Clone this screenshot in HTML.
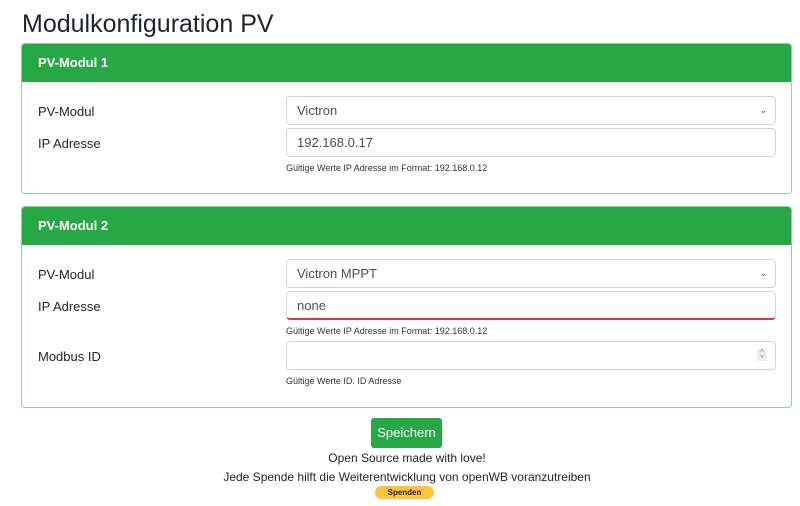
<!DOCTYPE html><html><head><style>
body{margin:0;width:800px;height:506px;background:#fff;font-family:"Liberation Sans",sans-serif;color:#212529;position:relative;overflow:hidden}
.a{position:absolute}
h1{position:absolute;left:22px;top:8px;margin:0;font-size:25px;font-weight:400;line-height:32px}
.card{position:absolute;left:21px;width:769px;border:1px solid #8fd19e;border-radius:4px;overflow:hidden}
.hd{background:#28a745;color:#fff;font-weight:bold;font-size:13px;height:38px;line-height:38px;padding-left:16px}
.lbl{position:absolute;left:16px;font-size:13px}
.in{position:absolute;left:264px;width:478px;height:27px;border:1px solid #ced4da;border-radius:4px;font-size:13px;line-height:27px;padding-left:10px;color:#495057;box-sizing:content-box}
.help{position:absolute;left:264px;font-size:9px;color:#333}
</style></head><body>
<h1>Modulkonfiguration PV</h1>
<div class="card" style="top:43px;height:149px">
<div class="hd">PV-Modul 1</div>
<div class="lbl" style="top:60px">PV-Modul</div>
<div class="in" style="top:52px">Victron<span class="a" style="right:8px;top:0;font-size:9px">&#8964;</span></div>
<div class="lbl" style="top:92px">IP Adresse</div>
<div class="in" style="top:84px">192.168.0.17</div>
<div class="help" style="top:119px">Gültige Werte IP Adresse im Format: 192.168.0.12</div>
</div>
<div class="card" style="top:206px;height:200px">
<div class="hd">PV-Modul 2</div>
<div class="lbl" style="top:60px">PV-Modul</div>
<div class="in" style="top:52px">Victron MPPT<span class="a" style="right:8px;top:0;font-size:9px">&#8964;</span></div>
<div class="lbl" style="top:92px">IP Adresse</div>
<div class="in" style="top:84px;border-bottom:2px solid #dc3545;height:26px">none</div>
<div class="help" style="top:119px">Gültige Werte IP Adresse im Format: 192.168.0.12</div>
<div class="lbl" style="top:142px">Modbus ID</div>
<div class="in" style="top:134px"><span class="a" style="right:8px;top:7px;width:10px;height:12px;background:#eee;font-size:7px;line-height:6px;text-align:center;color:#888">&#708;<br>&#709;</span></div>
<div class="help" style="top:169px">Gültige Werte ID. ID Adresse</div>
</div>
<div class="a" style="left:371px;top:418px;width:71px;height:30px;background:#28a745;border-radius:3px;color:#fff;font-size:13px;line-height:30px;text-align:center">Speichern</div>
<div class="a" style="left:0;width:814px;top:451px;text-align:center;font-size:12px">Open Source made with love!</div>
<div class="a" style="left:0;width:814px;top:470px;text-align:center;font-size:12px">Jede Spende hilft die Weiterentwicklung von openWB voranzutreiben</div>
<div class="a" style="left:375px;top:486px;width:59px;height:13px;background:#ffc439;border-radius:7px;font-size:8px;font-weight:bold;line-height:13px;text-align:center">Spenden</div>
</body></html>
